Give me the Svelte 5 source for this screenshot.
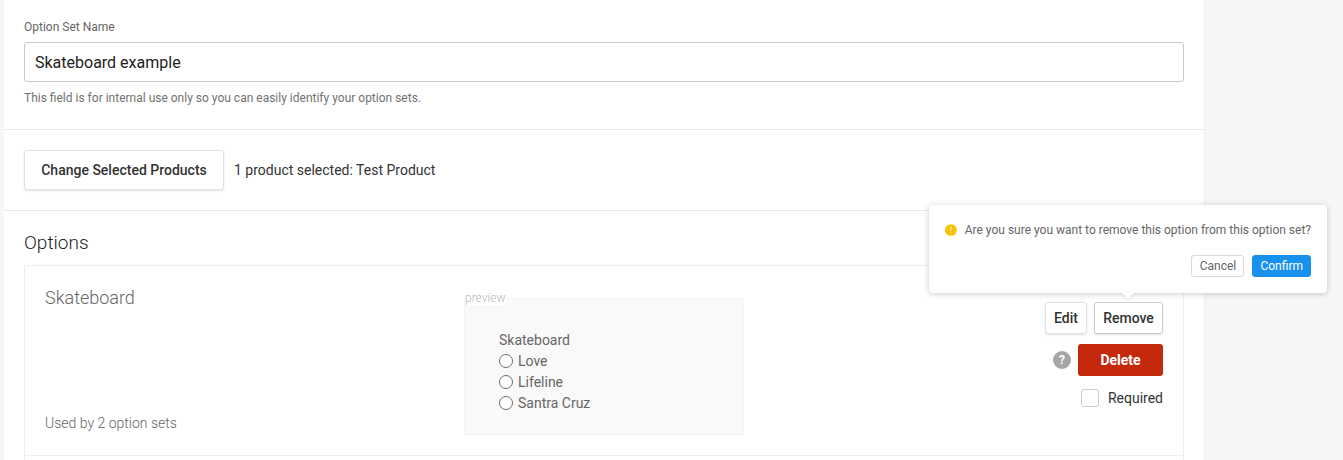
<script lang="ts">
  const choices = ["Love", "Lifeline", "Santra Cruz"];
</script>

<div class="page">
  <main class="panel">
    <section class="name-section">
      <label class="label" for="set-name">Option Set Name</label>
      <input id="set-name" class="text-input" value="Skateboard example" />
      <p class="help">This field is for internal use only so you can easily identify your option sets.</p>
    </section>

    <section class="products">
      <button class="btn large">Change Selected Products</button>
      <span class="selected">1 product selected: Test Product</span>
    </section>

    <section class="options">
      <h2>Options</h2>
      <div class="option-list">
        <div class="option">
          <div class="summary">
            <h3>Skateboard</h3>
            <div class="used">Used by 2 option sets</div>
          </div>
          <div class="preview">
            <span class="preview-tag">preview</span>
            <div class="preview-title">Skateboard</div>
            {#each choices as choice}
              <div class="choice"><span class="radio"></span>{choice}</div>
            {/each}
          </div>
          <div class="actions">
            <div class="row">
              <button class="btn small">Edit</button>
              <button class="btn small active">Remove</button>
            </div>
            <div class="row delete-row">
              <span class="hint">?</span>
              <button class="delete">Delete</button>
            </div>
            <div class="row required">
              <span class="checkbox"></span>
              <span>Required</span>
            </div>
          </div>
        </div>
      </div>
    </section>
  </main>

  <div class="popover">
    <div class="message">
      <svg width="12" height="12" viewBox="0 0 12 12">
        <circle cx="6" cy="6" r="6" fill="#ffbf00" />
        <rect x="5.3" y="2.6" width="1.4" height="4.6" rx="0.5" fill="#fff" opacity="0.75" />
        <rect x="5.3" y="8" width="1.4" height="1.4" rx="0.5" fill="#fff" opacity="0.75" />
      </svg>
      <span>Are you sure you want to remove this option from this option set?</span>
    </div>
    <div class="popover-buttons">
      <button class="pop-btn cancel">Cancel</button>
      <button class="pop-btn primary">Confirm</button>
    </div>
    <span class="arrow"></span>
  </div>
</div>

<style>
  :global(body) {
    margin: 0;
    background: #f5f7f6;
    font-family: Roboto, "Liberation Sans", sans-serif;
    overflow: hidden;
  }
  .page {
    position: relative;
    height: 460px;
    overflow: hidden;
  }
  .panel {
    width: 1201px;
    margin-left: 4px;
    height: 460px;
    box-sizing: border-box;
    background: #fff;
    border-right: 1px solid #eee;
  }
  section {
    padding: 0 20px;
  }
  .name-section {
    height: 130px;
    box-sizing: border-box;
    padding-top: 20px;
    border-bottom: 1px solid #e8e8e8;
  }
  .label {
    display: block;
    height: 22px;
    font-size: 12px;
    line-height: 15px;
    color: #666;
  }
  .text-input {
    display: block;
    width: 1160px;
    height: 40px;
    box-sizing: border-box;
    padding: 1px 10px 0;
    border: 1px solid #c8c8c8;
    border-radius: 3px;
    font: 400 16px Roboto, sans-serif;
    color: #222;
    outline: none;
  }
  .help {
    margin: 9px 0 0;
    font-size: 12px;
    line-height: 14px;
    color: #727272;
  }
  .products {
    height: 81px;
    box-sizing: border-box;
    padding-top: 20px;
    display: flex;
    align-items: flex-start;
    gap: 10px;
    border-bottom: 1px solid #e8e8e8;
  }
  .selected {
    font-size: 14px;
    line-height: 40px;
    color: #333;
  }
  .btn {
    box-sizing: border-box;
    border: 1px solid #e3e3e3;
    border-radius: 3px;
    background: #fff;
    box-shadow: 0 1px 2px rgba(0, 0, 0, 0.12);
    font-family: Roboto, sans-serif;
    font-weight: 500;
    color: #333;
    padding: 0;
  }
  .btn.large {
    width: 200px;
    height: 40px;
    font-size: 14px;
  }
  .btn.small {
    height: 32px;
    font-size: 14px;
  }
  .btn.small:first-child {
    width: 42px;
  }
  .btn.active {
    width: 69px;
    border-color: #ccc;
  }
  h2 {
    margin: 0;
    padding-top: 20px;
    height: 54px;
    box-sizing: border-box;
    font-size: 19px;
    line-height: 24px;
    font-weight: 300;
    color: #222;
  }
  .option-list {
    width: 1160px;
    height: 230px;
    box-sizing: border-box;
    border: 1px solid #eee;
    border-bottom: none;
  }
  .option {
    display: flex;
    height: 190px;
    box-sizing: border-box;
    padding: 20px;
    border-bottom: 1px solid #eee;
  }
  .summary {
    width: 419px;
    display: flex;
    flex-direction: column;
    justify-content: space-between;
    height: 145px;
  }
  h3 {
    margin: 0;
    font-size: 18px;
    line-height: 24px;
    font-weight: 300;
    color: #666;
  }
  .used {
    font-size: 14px;
    line-height: 16px;
    font-weight: 300;
    color: #666;
  }
  .preview {
    position: relative;
    width: 280px;
    height: 137px;
    margin-top: 12px;
    box-sizing: border-box;
    padding: 31px 0 0 34px;
    background: #f9f9f9;
    border: 1px solid #f3f3f3;
    font-size: 14px;
    color: #666;
  }
  .preview-tag {
    position: absolute;
    left: 0;
    top: -8px;
    padding-right: 1px;
    background: #fff;
    font-size: 12px;
    line-height: 14px;
    font-weight: 300;
    color: #b9b9b9;
  }
  .preview-title {
    line-height: 20px;
  }
  .choice {
    display: flex;
    align-items: center;
    gap: 5px;
    height: 21px;
  }
  .radio {
    width: 14px;
    height: 14px;
    box-sizing: border-box;
    border: 1px solid #6d6d6d;
    border-radius: 50%;
    background: #fff;
  }
  .actions {
    flex: 1;
    padding-top: 16px;
    display: flex;
    flex-direction: column;
    align-items: flex-end;
  }
  .row {
    display: flex;
    align-items: center;
    gap: 7px;
  }
  .delete-row {
    margin-top: 10px;
  }
  .hint {
    width: 18px;
    height: 18px;
    border-radius: 50%;
    background: #a6a6a6;
    color: #fff;
    font-size: 12px;
    font-weight: 700;
    line-height: 18px;
    text-align: center;
  }
  .delete {
    width: 85px;
    height: 32px;
    border: none;
    border-radius: 3px;
    background: #c4290e;
    color: #fff;
    font: 700 14px Roboto, sans-serif;
    padding: 0;
  }
  .required {
    margin-top: 12px;
    gap: 9px;
    font-size: 14px;
    color: #333;
    height: 20px;
  }
  .checkbox {
    width: 18px;
    height: 18px;
    box-sizing: border-box;
    border: 1px solid #ccc;
    border-radius: 3px;
    background: #fff;
  }
  .popover {
    position: absolute;
    left: 929px;
    top: 205px;
    width: 398px;
    height: 88px;
    box-sizing: border-box;
    padding: 16px;
    background: #fff;
    border-radius: 4px;
    box-shadow: 0 1px 6px rgba(0, 0, 0, 0.2);
  }
  .message {
    display: flex;
    align-items: center;
    gap: 8px;
    font-size: 12px;
    line-height: 18px;
    color: #666;
    white-space: nowrap;
  }
  .popover-buttons {
    display: flex;
    justify-content: flex-end;
    gap: 8px;
    margin-top: 16px;
  }
  .pop-btn {
    height: 22px;
    box-sizing: border-box;
    padding: 0 7px;
    border: 1px solid #d9d9d9;
    border-radius: 3px;
    background: #fff;
    color: #666;
    font: 400 12px Roboto, sans-serif;
  }
  .pop-btn.cancel {
    width: 53px;
    padding: 0;
  }
  .pop-btn.primary {
    background: #1890ee;
    border-color: #1890ee;
    color: #fff;
  }
  .arrow {
    position: absolute;
    left: 195px;
    bottom: -4px;
    width: 8px;
    height: 8px;
    background: #fff;
    transform: rotate(45deg);
    box-shadow: 2px 2px 3px rgba(0, 0, 0, 0.07);
  }
</style>
